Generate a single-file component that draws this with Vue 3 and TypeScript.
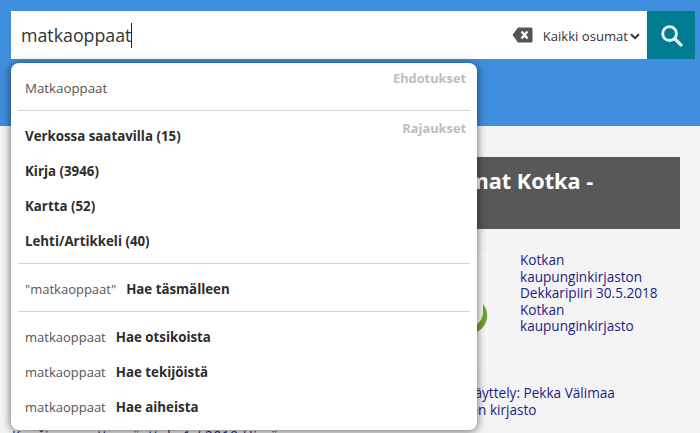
<script setup lang="ts">
const refinements = ['Verkossa saatavilla (15)', 'Kirja (3946)', 'Kartta (52)', 'Lehti/Artikkeli (40)']
const scopes = ['Hae otsikoista', 'Hae tekijöistä', 'Hae aiheista']
const query = 'matkaoppaat'
</script>

<template>
  <div class="page">
    <header class="hero">
      <form class="search" @submit.prevent>
        <div class="input">
          <span class="typed">{{ query }}</span><span class="caret"></span>
        </div>
        <svg class="clear" viewBox="0 0 21 16" width="21" height="16" aria-hidden="true">
          <path fill="#555" d="M6 0.5h13a1.5 1.5 0 0 1 1.5 1.5v12a1.5 1.5 0 0 1-1.5 1.5H6L0.5 8z" />
          <path stroke="#fff" stroke-width="2.2" d="M9.5 4.5l6 7m0-7l-6 7" fill="none" />
        </svg>
        <div class="scope">
          <span>Kaikki osumat</span>
          <svg viewBox="0 0 10 7" width="10" height="7" aria-hidden="true">
            <path d="M1 1.2l4 4 4-4" fill="none" stroke="#333" stroke-width="2" />
          </svg>
        </div>
        <button class="go" type="button" aria-label="Hae">
          <svg viewBox="0 0 24 24" width="23" height="23">
            <circle cx="10" cy="10" r="7.2" fill="none" stroke="#e3f4f5" stroke-width="3" />
            <path d="M15.5 15.5l6.3 6.3" stroke="#e3f4f5" stroke-width="3.6" stroke-linecap="round" />
          </svg>
        </button>
      </form>
    </header>

    <main class="content">
      <h1 class="banner">Tapahtumat Kotka -<br />&nbsp;</h1>
      <section class="card first">
        <div class="thumb">
          <svg class="arc" viewBox="0 0 16 32" width="16" height="32" aria-hidden="true">
            <path d="M11 0C15 5 16.5 12 14 18C12 23 8 27 2 29L2 22C7 20 10.5 15 11 9Z" fill="#6ea62c" />
          </svg>
        </div>
        <a class="link">Kotkan kaupunginkirjaston Dekkaripiiri 30.5.2018<br />Kotkan kaupunginkirjasto</a>
      </section>
      <section class="card second">
        <a class="link">Hirsimökin näyttely: Pekka Välimaa<br />Kymenlaakson kirjasto</a>
      </section>
      <a class="link third">Koešinen putty, näyttely 1 / 2019 Hirsän</a>
    </main>

    <div class="menu">
      <div class="group">
        <div class="title">Ehdotukset</div>
        <div class="row plain">Matkaoppaat</div>
      </div>
      <div class="group refine">
        <div class="title">Rajaukset</div>
        <div v-for="r in refinements" :key="r" class="row strong">{{ r }}</div>
      </div>
      <div class="group exact">
        <div class="row"><span class="q">"{{ query }}"</span><b>Hae täsmälleen</b></div>
      </div>
      <div class="group last">
        <div v-for="s in scopes" :key="s" class="row"><span class="q">{{ query }}</span><b>{{ s }}</b></div>
      </div>
    </div>
  </div>
</template>

<style>
html, body { margin: 0; overflow: hidden; }
</style>

<style scoped>
.page {
  position: relative;
  width: 700px;
  height: 433px;
  overflow: hidden;
  background: #f4f4f4;
  font-family: "Open Sans", sans-serif;
  color: #2d2d2d;
}
.hero {
  height: 126px;
  box-sizing: border-box;
  padding: 11px 5px 0 11px;
  background: #408fdf;
}
.search {
  display: flex;
  align-items: center;
  height: 48px;
  background: #fff;
}
.input {
  flex: 1;
  display: flex;
  align-items: center;
  padding-left: 10px;
  font-size: 17.8px;
  color: #333;
}
.caret {
  width: 1px;
  height: 25px;
  background: #222;
}
.clear { margin-right: 10px; }
.scope {
  display: flex;
  align-items: center;
  gap: 2px;
  margin-right: 7px;
  padding-top: 2px;
  font-size: 13.1px;
  color: #333;
}
.go {
  width: 48px;
  height: 48px;
  padding: 0;
  border: 0;
  display: flex;
  align-items: center;
  justify-content: center;
  background: #007c90;
}
.content { padding: 31px 20px 0; }
.banner {
  box-sizing: border-box;
  height: 72px;
  margin: 0;
  padding: 9px 0 0 357px;
  background: #585858;
  color: #fff;
  font-size: 21.7px;
  line-height: 30px;
  font-weight: 700;
  white-space: nowrap;
  overflow: hidden;
}
.card { display: flex; }
.first { margin-top: 21px; }
.thumb {
  position: relative;
  width: 468px;
  height: 118px;
  margin-right: 32px;
  flex: none;
  overflow: hidden;
  background: #f8f8f8;
}
.arc { position: absolute; right: 0; top: 54px; }
.link {
  display: block;
  width: 150px;
  color: #1c1c87;
  font-size: 13.6px;
  line-height: 16.6px;
}
.first .link { padding-top: 2px; }
.second { padding-left: 374px; margin-top: 17px; }
.second .link { width: 240px; white-space: nowrap; }
.third { width: 400px; margin: 10px 0 0 -8px; white-space: nowrap; letter-spacing: 0.6px; }
.menu {
  position: absolute;
  left: 11px;
  top: 63px;
  width: 466px;
  height: 367px;
  box-sizing: border-box;
  padding: 0 7px;
  background: #fff;
  border-radius: 8px;
  box-shadow: 0 1px 10px rgba(0, 0, 0, 0.6);
}
.group { position: relative; border-bottom: 1px solid #d4d4d4; }
.group.last { border-bottom: 0; padding-top: 7px; }
.group.refine { padding: 7px 0 5px; }
.group.exact { padding: 7px 0 5px; }
.title {
  position: absolute;
  right: 4px;
  top: 6px;
  font-size: 12.8px;
  font-weight: 700;
  color: #bdbdbd;
}
.refine .title { top: 8px; }
.row {
  display: flex;
  align-items: center;
  height: 35px;
  padding-left: 7px;
  font-size: 13.3px;
}
.plain { height: 47px; padding-top: 2px; box-sizing: border-box; color: #555; }
.strong { font-weight: 700; }
.q { color: #555; margin-right: 10px; font-size: 13px; }
.row b { font-weight: 700; color: #2d2d2d; }
</style>
